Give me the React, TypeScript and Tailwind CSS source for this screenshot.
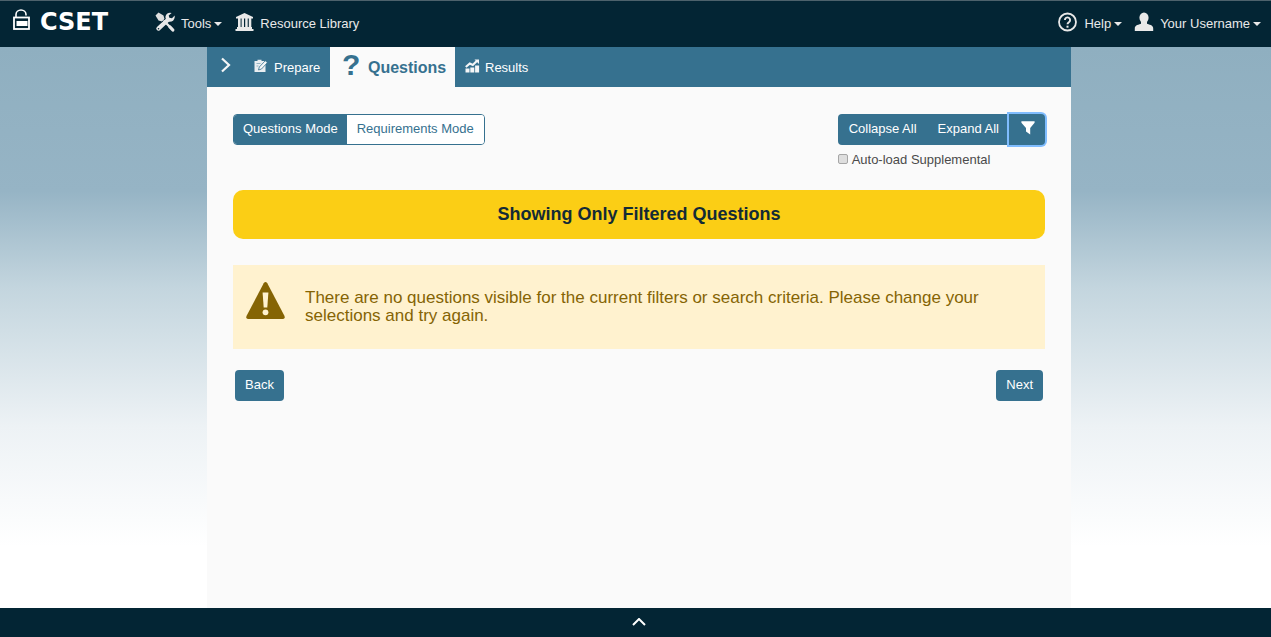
import type { ReactNode } from 'react';

function LockIcon() {
  return (
    <svg viewBox="0 0 18 22" className="h-[22px] w-[18px]" fill="none" stroke="#fff" aria-hidden="true">
      <path d="M4 8V5.500a5 4.500 0 0 1 10 0v1" strokeWidth="1.600" />
      <rect x="2" y="8.500" width="15" height="11.500" strokeWidth="1.800" />
      <rect x="4.500" y="12" width="11" height="5" fill="#fff" stroke="none" />
    </svg>
  );
}

function ToolsIcon() {
  return (
    <svg viewBox="0 0 20 20" className="h-5 w-5" aria-hidden="true">
      <path d="M3.400 16.600 13 7.600" stroke="#e9e9e9" strokeWidth="4.200" strokeLinecap="round" />
      <path d="M16.600.9A5.200 5.200 0 0 0 10.600 4Q10 7 12 9l2.500.8q4.500 0 5.200-4.600V3.600L17 6.200 14.300 5.800 13.700 3.600Z" fill="#e9e9e9" />
      <path d="M.5 3.500 3.500.5 8.500 3.500 9.500 7 7 9.500 3.500 8.500Z" fill="#dedede" />
      <path d="m6.800 10.300 3.600-3.600" stroke="#032534" strokeWidth="1" />
      <path d="m8.500 8.500 9 9" stroke="#e9e9e9" strokeWidth="2.400" />
      <path d="m15 15 2.800 3" stroke="#e9e9e9" strokeWidth="3.200" strokeLinecap="round" />
      <circle cx="3.500" cy="16.700" r=".8" fill="#032534" />
    </svg>
  );
}

function LibraryIcon() {
  return (
    <svg viewBox="0 0 20 20" className="h-5 w-5" fill="#e9e9e9" aria-hidden="true">
      <path d="M10.500 1 19 5v1.400H2V5Z" />
      <path d="M4 6h2.600v9H4zM7.600 6H10v9H7.600zM11.200 6h2.500v9h-2.500zM14.800 6h2.500v9h-2.500zM3 15h15v2H3zM1.500 17h18v2h-18z" />
    </svg>
  );
}

function HelpIcon() {
  return (
    <svg viewBox="0 0 20 20" className="h-5 w-5" fill="none" stroke="#e9e9e9" aria-hidden="true">
      <circle cx="9.500" cy="10" r="8.500" strokeWidth="1.800" />
      <path d="M6.900 8a2.600 2.600 0 1 1 4 2.200C9.900 10.900 9.500 11.300 9.500 12.300" strokeWidth="1.900" />
      <path d="M9.500 13.700v2" strokeWidth="2" />
    </svg>
  );
}

function UserIcon() {
  return (
    <svg viewBox="0 0 20 20" className="h-5 w-5" fill="#e9e9e9" aria-hidden="true">
      <ellipse cx="10" cy="5.800" rx="4.600" ry="5.200" />
      <path d="M.8 19v-2.500c0-2.500 2-3.500 6.200-4.700V9h6v2.800c4.200 1.200 6.200 2.200 6.200 4.700V19Z" />
    </svg>
  );
}

function PrepareIcon() {
  return (
    <svg viewBox="0 0 14 14" className="h-3.5 w-3.5" aria-hidden="true">
      <path d="M.5 2h3V.8h4V2h4v11H.500Z" fill="#e9eef1" />
      <path d="M2.500 4.500h4M2.500 7h2" stroke="#7fa3b6" strokeWidth=".8" />
      <path d="m4.500 11 .8-3L11.300 1.700l2 2L7.500 10Z" fill="#f4f6f7" stroke="#36718f" strokeWidth=".8" />
    </svg>
  );
}

function ResultsIcon() {
  return (
    <svg viewBox="0 0 15 14" className="h-3.5 w-[15px]" fill="#f4f6f7" aria-hidden="true">
      <path d="M.5 9.500h4v4h-4zM5.300 8.500h4v5h-4zM10.100 6.500h4v7h-4z" />
      <path d="m.8 8 4-3.500 3 1.500 4-4" fill="none" stroke="#f4f6f7" strokeWidth="2.200" />
      <path d="M9.500.5H14V5Z" />
    </svg>
  );
}

function WarningIcon() {
  return (
    <svg viewBox="0 0 40 40" className="h-10 w-10 shrink-0" aria-hidden="true">
      <path d="M18.700 2.200q1.800-2.400 3.600 0L39.500 35q.8 2.700-1.500 2.900h-35Q.7 37.700 1.500 35Z" fill="#856404" />
      <path d="M17.600 11.500h5.800l-1.100 15h-3.600Z" fill="#fff2cf" />
      <circle cx="20.500" cy="31.300" r="2.900" fill="#fff2cf" />
    </svg>
  );
}

function Caret() {
  return <span className="ml-[3px] border-x-4 border-t-4 border-x-transparent border-t-[#e9e9e9]" />;
}

function MenuButton({ icon, label }: { icon: ReactNode; label: string }) {
  return (
    <button type="button" className="flex items-center">
      <span className="mb-1 mr-1.5">{icon}</span>
      {label}
      <Caret />
    </button>
  );
}

export default function App() {
  return (
    <div className="flex min-h-screen flex-col bg-white font-['Liberation_Sans',Arial,sans-serif] text-[13px] leading-5 text-[#4a4a4a]">
      <header className="flex h-[47px] items-center justify-between border-t border-[#4d626c] bg-[#032534] pl-3 pr-2.5 text-[#e9e9e9]">
        <div className="flex items-center">
          <a href="#home" className="mb-2 flex w-[143px] items-center gap-2.5 text-white">
            <LockIcon />
            <span className="pt-1 font-['DejaVu_Sans',sans-serif] text-2xl font-bold leading-6">CSET</span>
          </a>
          <nav className="flex items-center gap-3">
            <MenuButton icon={<ToolsIcon />} label="Tools" />
            <a href="#library" className="flex items-center">
              <span className="mb-1 mr-1.5"><LibraryIcon /></span>
              Resource Library
            </a>
          </nav>
        </div>
        <nav className="flex items-center gap-3">
          <MenuButton icon={<HelpIcon />} label="Help" />
          <MenuButton icon={<UserIcon />} label="Your Username" />
        </nav>
      </header>

      <div className="flex flex-1 justify-center bg-linear-[180deg,#8fafc0_0px,#96b4c5_144px,#c3d5de_240px,#edf2f5_380px,#ffffff_500px] pl-[7px]">
        <main className="w-full max-w-[864px] bg-[#fafafa]">
          <nav className="flex h-10 bg-[#36718f] text-white">
            <button type="button" aria-label="Open menu" className="flex w-[38px] items-center justify-center pb-1">
              <svg viewBox="0 0 10 16" className="h-4 w-2.5" fill="none" stroke="#f4f6f7" strokeWidth="2.200" aria-hidden="true">
                <path d="m1 1.500 7 6.500-7 6.500" />
              </svg>
            </button>
            <a href="#prepare" className="flex w-[85px] items-center gap-1.5 pl-[9px] pt-0.5">
              <span className="mb-1"><PrepareIcon /></span>
              Prepare
            </a>
            <a href="#questions" className="flex w-[125px] items-center gap-2 bg-[#fafafa] pl-3 pt-0.5 text-base font-bold text-[#36718f]">
              <span aria-hidden="true" className="mb-1.5 w-[18px] text-center text-[30px] leading-8">?</span>
              Questions
            </a>
            <a href="#results" className="flex items-center gap-[5px] pl-2.5 pt-0.5">
              <span className="mb-1"><ResultsIcon /></span>
              Results
            </a>
          </nav>

          <div className="px-[26px] pt-[27px]">
            <div className="flex items-start justify-between">
              <div className="flex h-[31px] overflow-hidden rounded border border-[#36718f]">
                <button type="button" className="bg-[#36718f] px-[9px] pb-0.5 text-white">Questions Mode</button>
                <button type="button" className="bg-white px-2.5 pb-0.5 text-[#36718f]">Requirements Mode</button>
              </div>
              <div>
                <div className="flex h-[31px] rounded bg-[#36718f] text-white">
                  <button type="button" className="px-[11px] pb-0.5">Collapse All</button>
                  <button type="button" className="px-2.5 pb-0.5">Expand All</button>
                  <button type="button" aria-label="Filter" className="flex w-9 items-center justify-center rounded-r bg-[#36718f] pb-1 pl-0.5 ring-2 ring-[#80bdff]">
                    <svg viewBox="0 0 14 14" className="h-3.5 w-3.5" fill="#fff" aria-hidden="true">
                      <path d="M.4.300h13.200v1.500L9.200 7v6.600L5 10.500V7L.400 1.800Z" />
                    </svg>
                  </button>
                </div>
                <label className="mt-[5px] flex items-center gap-1">
                  <input type="checkbox" className="mb-0.5 h-2.5 w-2.5 appearance-none rounded-xs border border-[#a6a6a6] bg-[#dedede]" />
                  Auto-load Supplemental
                </label>
              </div>
            </div>

            <h1 className="mt-5 flex h-[49px] items-center justify-center rounded-[10px] bg-[#fbce15] pb-0.5 text-lg font-bold text-[#132a36]">
              Showing Only Filtered Questions
            </h1>

            <div role="alert" className="mt-[26px] flex min-h-[84px] gap-5 bg-[#fff2cf] px-3 pt-4 text-[17px] leading-[18px] text-[#856404]">
              <WarningIcon />
              <p className="pt-2">
                There are no questions visible for the current filters or search criteria. Please change your selections and try again.
              </p>
            </div>

            <div className="mt-[21px] flex justify-between px-0.5">
              <button type="button" className="h-[31px] rounded bg-[#36718f] px-2.5 pb-0.5 text-white">Back</button>
              <button type="button" className="h-[31px] rounded bg-[#36718f] px-2.5 pb-0.5 text-white">Next</button>
            </div>
          </div>
        </main>
      </div>

      <footer className="flex h-[29px] justify-center bg-[#032534] pl-[7px]">
        <button type="button" aria-label="Expand footer" className="flex items-center pb-0.5">
          <svg viewBox="0 0 14 8" className="h-2 w-3.5" fill="none" stroke="#fff" strokeWidth="2" aria-hidden="true">
            <path d="m1 7 6-6 6 6" />
          </svg>
        </button>
      </footer>
    </div>
  );
}
